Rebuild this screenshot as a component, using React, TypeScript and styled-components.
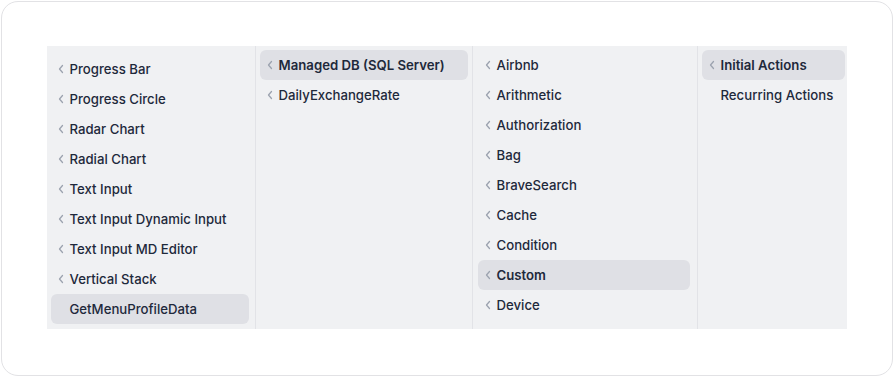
import React from "react";
import styled, { createGlobalStyle } from "styled-components";

type Item = { label: string; active?: boolean; bold?: boolean; chevron?: boolean };

const columns: { width: number; padTop: number; padLeft: number; padRight: number; items: Item[] }[] = [
  {
    width: 208,
    padTop: 8,
    padLeft: 4,
    padRight: 6,
    items: [
      { label: "Progress Bar" },
      { label: "Progress Circle" },
      { label: "Radar Chart" },
      { label: "Radial Chart" },
      { label: "Text Input" },
      { label: "Text Input Dynamic Input" },
      { label: "Text Input MD Editor" },
      { label: "Vertical Stack" },
      { label: "GetMenuProfileData", active: true, chevron: false },
    ],
  },
  {
    width: 216,
    padTop: 4,
    padLeft: 4,
    padRight: 4,
    items: [
      { label: "Managed DB (SQL Server)", active: true, bold: true },
      { label: "DailyExchangeRate" },
    ],
  },
  {
    width: 224,
    padTop: 4,
    padLeft: 5,
    padRight: 7,
    items: [
      { label: "Airbnb" },
      { label: "Arithmetic" },
      { label: "Authorization" },
      { label: "Bag" },
      { label: "BraveSearch" },
      { label: "Cache" },
      { label: "Condition" },
      { label: "Custom", active: true, bold: true },
      { label: "Device" },
    ],
  },
  {
    width: 149,
    padTop: 4,
    padLeft: 4,
    padRight: 2,
    items: [
      { label: "Initial Actions", active: true, bold: true },
      { label: "Recurring Actions", chevron: false },
    ],
  },
];

const Chevron: React.FC<{ hidden?: boolean }> = ({ hidden }) => (
  <ChevronBox $hidden={hidden}>
    <svg width="8" height="10" viewBox="0 0 8 10" fill="none">
      <path d="M5.5 1.5 L2.5 5 L5.5 8.5" stroke="#9ca3af" strokeWidth="1.3" strokeLinecap="round" strokeLinejoin="round" />
    </svg>
  </ChevronBox>
);

const App: React.FC = () => {
  return (
    <>
      <GlobalStyle />
      <Frame>
        <Panel>
          {columns.map((col, ci) => (
            <Column
              key={ci}
              $width={col.width}
              $padTop={col.padTop}
              $padLeft={col.padLeft}
              $padRight={col.padRight}
              $last={ci === columns.length - 1}
            >
              {col.items.map((item) => (
                <Row key={item.label} $active={item.active}>
                  <Chevron hidden={item.chevron === false} />
                  <Label $bold={item.bold}>{item.label}</Label>
                </Row>
              ))}
            </Column>
          ))}
        </Panel>
      </Frame>
    </>
  );
};

export default App;

const GlobalStyle = createGlobalStyle`
  html, body {
    margin: 0;
    padding: 0;
    background: #ffffff;
  }
  body {
    font-family: Inter, "Liberation Sans", sans-serif;
  }
`;

const Frame = styled.div`
  box-sizing: border-box;
  margin: 1px;
  width: 892px;
  height: 375px;
  border: 1.5px solid #e2e2e5;
  border-radius: 17px;
  padding: 43.5px 0 0 44.5px;
`;

const Panel = styled.div`
  display: flex;
  width: 800px;
  height: 283px;
  background: #f0f1f3;
  overflow: hidden;
`;

const Column = styled.div<{ $width: number; $padTop: number; $padLeft: number; $padRight: number; $last: boolean }>`
  box-sizing: border-box;
  width: ${(p) => p.$width + (p.$last ? 0 : 1)}px;
  flex-shrink: 0;
  padding: ${(p) => p.$padTop}px ${(p) => p.$padRight}px 4px ${(p) => p.$padLeft}px;
  border-right: ${(p) => (p.$last ? "none" : "1px solid #e2e3e7")};
  display: flex;
  flex-direction: column;
`;

const Row = styled.div<{ $active?: boolean }>`
  display: flex;
  align-items: center;
  height: 30px;
  padding-left: 6px;
  border-radius: 6px;
  background: ${(p) => (p.$active ? "#dfe0e5" : "transparent")};
`;

const ChevronBox = styled.span<{ $hidden?: boolean }>`
  display: flex;
  align-items: center;
  width: 13px;
  flex-shrink: 0;
  visibility: ${(p) => (p.$hidden ? "hidden" : "visible")};
`;

const Label = styled.span<{ $bold?: boolean }>`
  font-size: 13.2px;
  font-weight: ${(p) => (p.$bold ? 600 : 500)};
  color: #1e293b;
  white-space: nowrap;
`;
